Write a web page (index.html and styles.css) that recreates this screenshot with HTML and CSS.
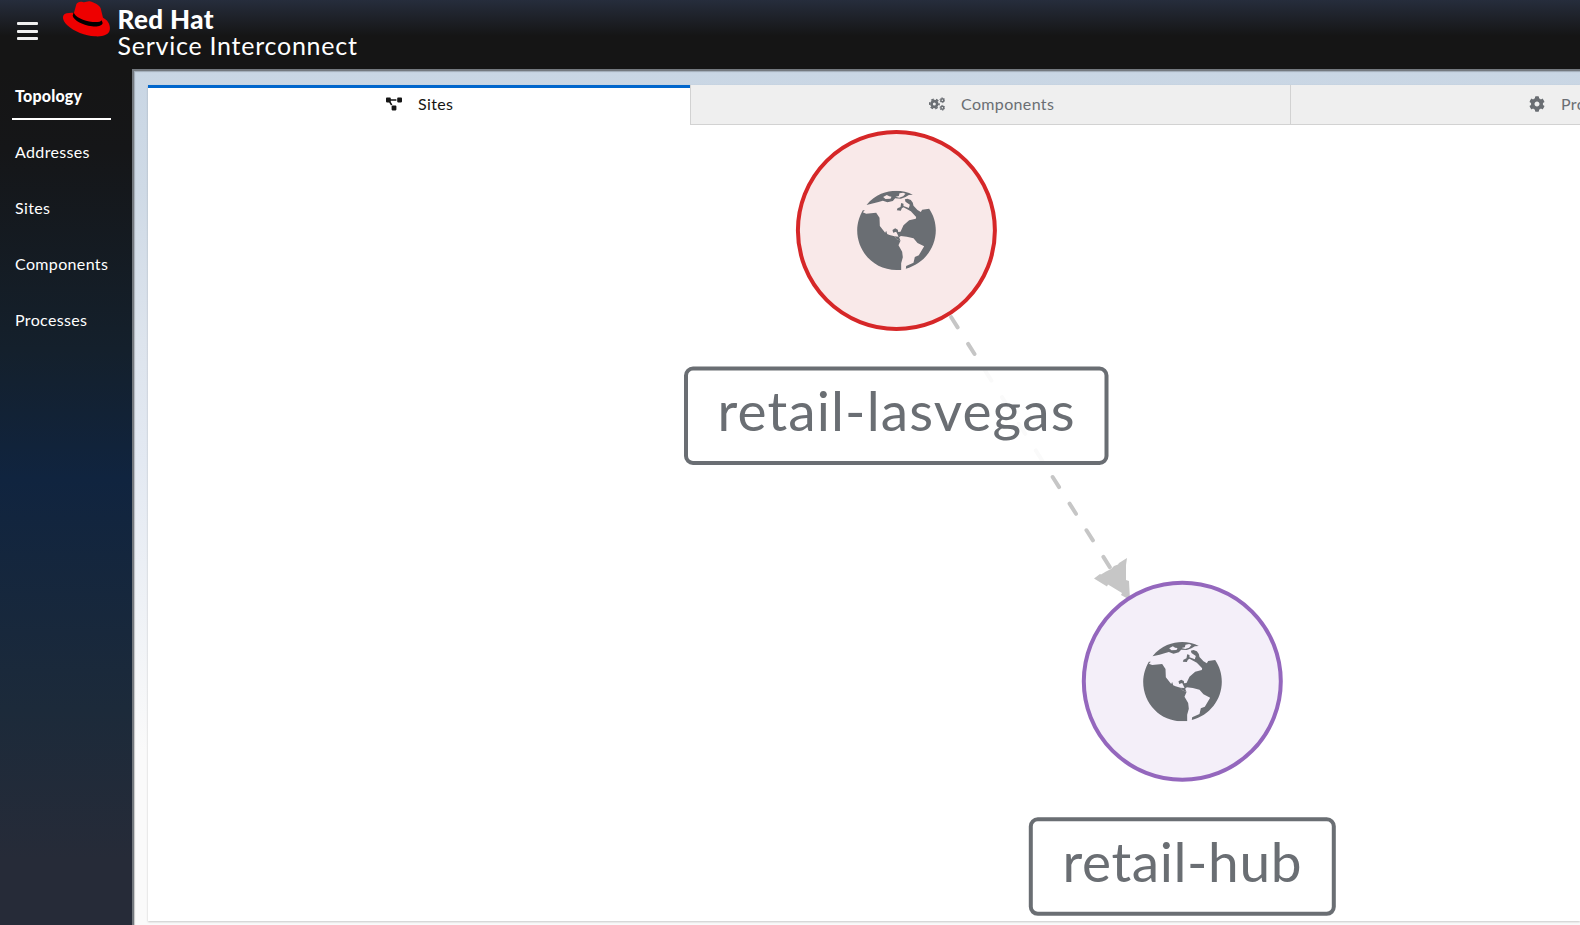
FILE: index.html
```html
<!DOCTYPE html>
<html lang="en">
<head>
<meta charset="utf-8">
<title>Red Hat Service Interconnect</title>
<link rel="stylesheet" href="styles.css">
</head>
<body>
<header class="masthead">
  <button class="menu" aria-label="Menu"><span></span><span></span><span></span></button>
  <div class="brand">
    <svg class="hat" viewBox="190 4 141 108">
      <path fill="#e00" d="M223 39 L230 14 C233 7 241 5 249 7 C256 10 262 4 270 5 C285 9 299 16 303 26 L310 54 C326 62 333 76 330 92 C327 106 308 112 285 110 C258 108 222 96 202 76 C189 63 186 50 195 43 C202 38 213 40 223 39 Z"/>
      <path fill="#000" d="M222 38 L219 48 C222 61 247 76 277 80 C295 82 308 78 309 70 L306 62 C304 67 292 68 279 67 C252 64 226 53 222 38 Z"/>
    </svg>
    <div class="brand-text"><div class="brand-name">Red Hat</div><div class="brand-product">Service Interconnect</div></div>
  </div>
</header>
<div class="layout">
  <nav class="sidebar">
    <a class="nav-item active">Topology</a>
    <a class="nav-item">Addresses</a>
    <a class="nav-item">Sites</a>
    <a class="nav-item">Components</a>
    <a class="nav-item">Processes</a>
  </nav>
  <main class="content">
    <section class="card">
      <div class="tabs">
        <div class="tab selected">
          <svg class="tab-icon" viewBox="0 0 640 512"><path fill="currentColor" d="M384 320H256c-17.670 0-32 14.330-32 32v128c0 17.670 14.330 32 32 32h128c17.670 0 32-14.330 32-32V352c0-17.670-14.330-32-32-32zM192 32c0-17.670-14.330-32-32-32H32C14.330 0 0 14.330 0 32v128c0 17.670 14.330 32 32 32h95.720l73.160 128.040C211.980 300.980 232.400 288 256 288h.28L192 175.510V128h224V64H192V32zM608 0H480c-17.670 0-32 14.330-32 32v128c0 17.670 14.330 32 32 32h128c17.670 0 32-14.330 32-32V32c0-17.670-14.330-32-32-32z"/></svg>
          <span>Sites</span>
        </div>
        <div class="tab">
          <svg class="tab-icon" viewBox="0 0 48 38"><g fill="none" stroke="currentColor"><circle cx="16" cy="19" r="8.500" stroke-width="8"/><circle cx="16" cy="19" r="14" stroke-width="5" stroke-dasharray="8 6.660" stroke-dashoffset="4"/><circle cx="40" cy="7.500" r="4.500" stroke-width="4.500"/><circle cx="40" cy="7.500" r="7.300" stroke-width="2.500" stroke-dasharray="4.200 3.440"/><circle cx="40" cy="30.500" r="4.500" stroke-width="4.500"/><circle cx="40" cy="30.500" r="7.300" stroke-width="2.500" stroke-dasharray="4.200 3.440"/></g></svg>
          <span>Components</span>
        </div>
        <div class="tab">
          <svg class="tab-icon" viewBox="0 0 512 512"><path fill="currentColor" d="M487.400 315.700l-42.600-24.600c4.300-23.200 4.300-47 0-70.200l42.600-24.600c4.900-2.800 7.100-8.600 5.500-14-11.100-35.600-30-67.800-54.700-94.600-3.800-4.100-10-5.100-14.800-2.300L380.800 110c-17.900-15.400-38.500-27.300-60.800-35.100V25.800c0-5.600-3.900-10.500-9.400-11.700-36.700-8.200-74.300-7.800-109.200 0-5.500 1.200-9.400 6.100-9.400 11.700V75c-22.200 7.900-42.800 19.800-60.800 35.100L88.700 85.500c-4.900-2.800-11-1.900-14.800 2.300-24.700 26.700-43.600 58.900-54.700 94.600-1.700 5.400.6 11.200 5.500 14L67.300 221c-4.300 23.200-4.300 47 0 70.200l-42.600 24.600c-4.900 2.800-7.100 8.600-5.500 14 11.100 35.600 30 67.800 54.700 94.600 3.800 4.100 10 5.100 14.800 2.300l42.600-24.600c17.900 15.400 38.500 27.300 60.800 35.100v49.200c0 5.600 3.900 10.500 9.400 11.700 36.700 8.200 74.300 7.800 109.200 0 5.500-1.200 9.400-6.100 9.400-11.700v-49.200c22.200-7.900 42.800-19.800 60.800-35.100l42.600 24.600c4.900 2.800 11 1.900 14.800-2.300 24.700-26.700 43.600-58.900 54.700-94.600 1.500-5.500-.7-11.300-5.600-14.100zM256 336c-44.100 0-80-35.900-80-80s35.900-80 80-80 80 35.900 80 80-35.900 80-80 80z"/></svg>
          <span>Processes</span>
        </div>
      </div>
      <svg class="graph" viewBox="148 125 1432 796">
        <defs>
          <symbol id="globe" viewBox="231 212 236 238">
            <path fill="#6a6e73" fill-rule="evenodd" d="M259 255 C285 222 320 212 348 212 C365 212 384 216 398 224 L386 225 L376 231 L362 236 L345 235 L338 243 L322 247 L308 242 L295 246 L280 250 Z M309 231 L320 225 L327 229 L334 230 L331 236 L316 237 Z M346 230 L356 228 L358 220 L369 218 L376 221 L369 229 L357 233 Z"/>
            <path fill="#6a6e73" d="M248 271 L254 271 L248 277 L258 281 L288 278 L298 293 L299 318 L315 338 L318 332 L321 342 L328 345 L343 349 L349 357 L361 362 L355 376 L366 395 L368 412 L363 430 L363 450 L349 450 C283 450 231 397 231 331 C231 310 238 288 248 271 Z"/>
            <path fill="#6a6e73" d="M447 266 C460 285 467 308 467 331 C467 385 430 432 377 446 L378 438 L400 428 L404 411 L416 406 L432 379 L412 369 L400 355 L380 350 L362 348 L357 352 L361 362 L349 357 L343 349 L355 350 L352 343 L348 335 L339 338 L337 330 L345 325 L353 329 L354 336 L361 335 L370 316 L387 301 L407 296 L408 291 L392 274 L370 262 L365 265 L362 272 L350 271 L352 265 L361 261 L363 249 L370 251 L370 258 L386 264 L389 254 L376 245 L374 238 L382 236 L392 240 L398 248 L400 257 L412 270 L422 276 L426 269 Z"/>
          </symbol>
        </defs>
        <path class="edge" d="M951.200 317.200 L1112 570.500"/>
        <path fill="#c6c6c6" d="M1127 558 L1119 563 L1118 564.500 L1114 566 L1111 569 L1106 571.500 L1101 574.500 L1100 574 L1094 578.500 L1107 586.500 L1108 584.500 L1122 593 L1121 595 L1130 600 L1129 581 L1126 580 L1126 565 Z"/>
        <circle class="node red" cx="896.400" cy="230.500" r="98.500"/>
        <use href="#globe" x="857" y="190.700" width="79" height="79.300"/>
        <circle class="node purple" cx="1182.300" cy="681.300" r="98.500"/>
        <use href="#globe" x="1143" y="642" width="79" height="79.300"/>
        <rect class="label-box" x="686" y="368.500" width="420.500" height="94.500" rx="7"/>
        <text class="label" x="717.500" y="431" textLength="357">retail-lasvegas</text>
        <rect class="label-box" x="1030.800" y="819.300" width="303" height="94.500" rx="7"/>
        <text class="label" x="1062.500" y="882" textLength="239">retail-hub</text>
      </svg>
    </section>
  </main>
</div>
</body>
</html>
```

FILE: styles.css
```css
* { box-sizing: border-box; }
body {
  margin: 0;
  width: 1580px;
  height: 925px;
  overflow: hidden;
  display: flex;
  flex-direction: column;
  font-family: Lato, "Open Sans", sans-serif;
  font-size: 16px;
  letter-spacing: 0.350px;
  background: #151515;
}
.masthead {
  height: 69px;
  flex: none;
  display: flex;
  align-items: flex-start;
  background: linear-gradient(#262d3c 0, #151515 36px);
  color: #fff;
}
.menu {
  width: 21px;
  margin: 22px 0 0 16.500px;
  padding: 0;
  border: 0;
  background: none;
  display: flex;
  flex-direction: column;
  gap: 4.500px;
}
.menu span { height: 3px; border-radius: 1px; background: #f0f0f0; }
.brand { display: flex; margin-left: 25.500px; }
.hat { width: 47px; height: 36px; margin-top: 1px; }
.brand-text { margin-left: 7.500px; white-space: nowrap; }
.brand-name { font-size: 26px; line-height: 26px; margin-top: 6px; font-weight: 900; letter-spacing: 0.400px; }
.brand-product { font-size: 25px; line-height: 27px; letter-spacing: 0.750px; }
.layout { flex: 1; display: flex; min-height: 0; }
.sidebar {
  width: 132px;
  flex: none;
  padding-left: 15px;
  color: #fff;
  background: linear-gradient(#151515 0, #151618 80px, #14202c 280px, #10243f 410px, #1c2a3a 640px, #262b38 790px);
}
.nav-item {
  display: flex;
  align-items: center;
  height: 56px;
  padding-bottom: 4px;
  white-space: nowrap;
}
.active {
  height: 51px;
  width: 99px;
  margin: 0 0 5px -3px;
  padding: 4px 0 0 3px;
  border-bottom: 2px solid #fff;
  font-weight: 900;
  letter-spacing: 0.200px;
}
.content {
  flex: 1;
  min-width: 0;
  padding: 14px 0 4px 14px;
  border-left: 2px solid #74797f;
  border-top: 2px solid #74797f;
  box-shadow: inset 1px 1px 1px rgba(3, 3, 3, 0.200);
  background: linear-gradient(#c9d6e4 0, #cfdae6 120px, #dde4ed 270px, #e3e9f2 390px, #fafafa 680px);
}
.card {
  width: 1432px;
  height: 836px;
  overflow: hidden;
  background: #fff;
  box-shadow: 0 1px 2px rgba(3, 3, 3, 0.200);
}
.tabs { display: flex; height: 40px; }
.tab {
  flex: none;
  display: flex;
  align-items: center;
  width: 600px;
  padding: 0 0 2px 238px;
  gap: 16px;
  background: #efefef;
  color: #6a6e73;
  border-left: 1px solid #d2d2d2;
  border-bottom: 1px solid #d2d2d2;
}
.selected {
  width: 542px;
  padding-bottom: 6px;
  background: #fff;
  color: #151515;
  border: 0;
  border-top: 3px solid #06c;
}
.tab-icon { width: 16px; height: 16px; }
.graph { display: block; width: 1432px; height: 796px; letter-spacing: 0; }
.edge { stroke: #c6c6c6; stroke-width: 4; stroke-dasharray: 12 19.550; stroke-linecap: round; }
.node { stroke-width: 4; }
.red { fill: #f9e9e9; stroke: #d62728; }
.purple { fill: #f4eff9; stroke: #9467bd; }
.label-box { fill: #fff; fill-opacity: 0.900; stroke: #6a6e73; stroke-width: 4; }
.label { font-size: 55px; fill: #6a6e73; }
```
